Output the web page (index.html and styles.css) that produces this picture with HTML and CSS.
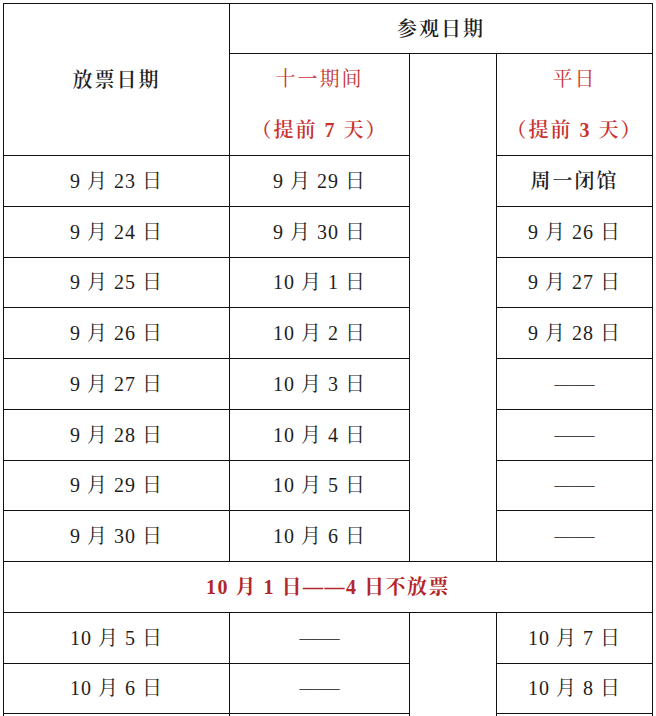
FILE: index.html
```html
<!DOCTYPE html>
<html lang="zh-CN">
<head>
<meta charset="utf-8">
<title>放票日期</title>
<link rel="stylesheet" href="styles.css">
</head>
<body>
<table class="sched">
  <colgroup><col class="c1"><col class="c2"><col class="c3"><col class="c4"></colgroup>
  <tr class="r-top"><td rowspan="2" class="hd">放票日期</td><td colspan="3" class="hd">参观日期</td></tr>
  <tr class="r-sub"><td class="red">十一期间<br><span class="paren">（提前 7 天）</span></td><td rowspan="9" class="blank"></td><td class="red">平日<br><span class="paren">（提前 3 天）</span></td></tr>
  <tr><td>9 月 23 日</td><td>9 月 29 日</td><td class="hd">周一闭馆</td></tr>
  <tr><td>9 月 24 日</td><td>9 月 30 日</td><td>9 月 26 日</td></tr>
  <tr><td>9 月 25 日</td><td>10 月 1 日</td><td>9 月 27 日</td></tr>
  <tr><td>9 月 26 日</td><td>10 月 2 日</td><td>9 月 28 日</td></tr>
  <tr><td>9 月 27 日</td><td>10 月 3 日</td><td class="dash">——</td></tr>
  <tr><td>9 月 28 日</td><td>10 月 4 日</td><td class="dash">——</td></tr>
  <tr><td>9 月 29 日</td><td>10 月 5 日</td><td class="dash">——</td></tr>
  <tr><td>9 月 30 日</td><td>10 月 6 日</td><td class="dash">——</td></tr>
  <tr><td colspan="4" class="notice">10 月 1 日——4 日不放票</td></tr>
  <tr><td>10 月 5 日</td><td class="dash">——</td><td rowspan="3" class="blank"></td><td>10 月 7 日</td></tr>
  <tr><td>10 月 6 日</td><td class="dash">——</td><td>10 月 8 日</td></tr>
  <tr><td></td><td></td><td></td></tr>
</table>
</body>
</html>
```

FILE: styles.css
```css
html, body {
  margin: 0;
  padding: 0;
  background: #fff;
  overflow: hidden;
}
body {
  padding: 3px 0 0 3px;
  font-family: "Liberation Serif", "Noto Serif CJK SC", "Noto Sans CJK SC", serif;
  font-size: 20px;
  color: #1e1e1e;
}
.sched {
  border-collapse: collapse;
  table-layout: fixed;
  width: 649px;
}
.c1 { width: 226px; }
.c2 { width: 180px; }
.c3 { width: 87px; }
.c4 { width: 156px; }
.sched td {
  border: 1px solid #111;
  text-align: center;
  vertical-align: middle;
  padding: 0;
  line-height: 24px;
  white-space: nowrap;
  letter-spacing: 1px;
}
.sched tr { height: 50.75px; }
.sched tr.r-top { height: 50px; }
.sched tr.r-sub { height: 101px; }
.sched td.hd {
  font-weight: 600;
  letter-spacing: 2px;
}
.sched td.red {
  color: #c8332f;
  line-height: 50.5px;
  letter-spacing: 2px;
}
.paren { font-weight: 600; }
.sched td.dash {
  color: #444;
  letter-spacing: 0;
}
.sched td.notice {
  color: #b3262a;
  font-weight: 700;
  letter-spacing: 1.5px;
}
```
